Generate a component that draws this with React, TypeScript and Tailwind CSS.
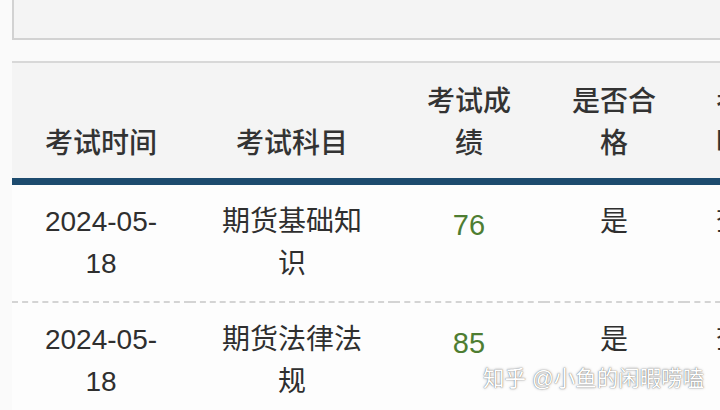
import { FC } from 'react'

interface ScoreRow {
  date: string
  subject: string
  score: number
  passed: string
  extra: string
}

const rows: ScoreRow[] = [
  { date: '2024-05-18', subject: '期货基础知识', score: 76, passed: '是', extra: '查看' },
  { date: '2024-05-18', subject: '期货法律法规', score: 85, passed: '是', extra: '查看' }
]

const ScoreTable: FC = () => (
  <table className="mt-[21px] ml-3 w-[792px] table-fixed text-[28px] leading-[42px] text-[#2f2f2f]">
    <colgroup>
      <col className="w-[178px]" />
      <col className="w-[204px]" />
      <col className="w-[150px]" />
      <col className="w-[140px]" />
      <col className="w-[120px]" />
    </colgroup>
    <thead>
      <tr className="bg-[#f4f4f4] text-[#333]">
        <th className="border-t-2 border-b-[7px] border-t-[#d8d8d8] border-b-[#1d4b6e] px-6 pt-[18px] pb-[13px] align-bottom font-medium">
          考试时间
        </th>
        <th className="border-t-2 border-b-[7px] border-t-[#d8d8d8] border-b-[#1d4b6e] px-6 pt-[18px] pb-[13px] align-bottom font-medium">
          考试科目
        </th>
        <th className="border-t-2 border-b-[7px] border-t-[#d8d8d8] border-b-[#1d4b6e] px-6 pt-[18px] pb-[13px] align-bottom font-medium">
          考试成绩
        </th>
        <th className="border-t-2 border-b-[7px] border-t-[#d8d8d8] border-b-[#1d4b6e] px-6 pt-[18px] pb-[13px] align-bottom font-medium">
          是否合格
        </th>
        <th className="border-t-2 border-b-[7px] border-t-[#d8d8d8] border-b-[#1d4b6e] pl-8 pt-[18px] pb-[13px] text-left align-bottom font-medium">
          考试证明
        </th>
      </tr>
    </thead>
    <tbody className="bg-[#fdfdfd]">
      {rows.map((row, i) => (
        <tr
          key={i}
          className={i < rows.length - 1 ? 'border-b-2 border-dashed border-[#d4d4d4]' : ''}
        >
          <td className="px-6 py-4 text-center align-top">{row.date}</td>
          <td className="px-6 py-4 text-center align-top">{row.subject}</td>
          <td className="px-6 pt-[19px] pb-4 text-center align-top text-[29px] text-[#4e7d32]">{row.score}</td>
          <td className="px-6 py-4 text-center align-top">{row.passed}</td>
          <td className="pl-8 py-4 text-left align-top">{row.extra}</td>
        </tr>
      ))}
    </tbody>
  </table>
)

export default function App() {
  return (
    <div className="relative h-[410px] w-[720px] overflow-hidden bg-[#fafafa] font-['Liberation_Sans','Noto_Sans_CJK_SC',sans-serif]">
      <div className="ml-3 h-10 border-b-2 border-l-2 border-[#d2d2d2] bg-[#f4f4f4]" />
      <ScoreTable />
      <div className="absolute top-[365px] left-[483px] text-[21.5px] leading-7 text-white [text-shadow:0_0_1px_rgba(0,0,0,0.6),0_0_3px_rgba(0,0,0,0.3)]">
        知乎 @小鱼的闲暇唠嗑
      </div>
    </div>
  )
}
